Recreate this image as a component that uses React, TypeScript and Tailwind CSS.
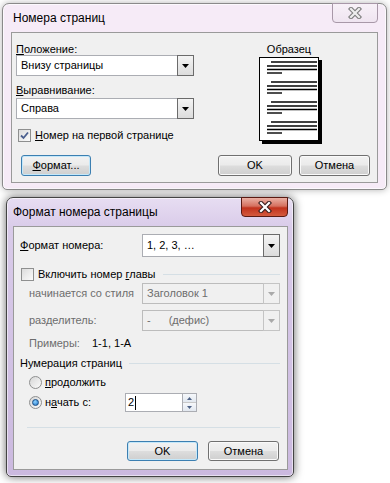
import React from "react";

function Arrow({ color }: { color: string }) {
  return (
    <svg width="7" height="4" viewBox="0 0 7 4">
      <polygon points="0,0 7,0 3.5,4" fill={color} />
    </svg>
  );
}

function Combo({
  value,
  disabled,
  className,
}: {
  value: React.ReactNode;
  disabled?: boolean;
  className: string;
}) {
  return (
    <div className={`flex ${className}`}>
      <div
        className={
          disabled
            ? "flex flex-1 items-center border border-r-0 border-[#bcbcbc] bg-[#f0f0f0] pl-[4px] text-[#6d6d6d]"
            : "flex flex-1 items-center border border-r-0 border-[#abadb3] bg-white pl-[4px]"
        }
      >
        {value}
      </div>
      <div
        className={
          disabled
            ? "flex w-[17px] items-center justify-center border border-[#c4c4c4] bg-[#f0f0f0]"
            : "flex w-[17px] items-center justify-center border border-[#6b6b6b] bg-[linear-gradient(180deg,#f4f4f4,#dcdcdc)]"
        }
      >
        <Arrow color={disabled ? "#a9a9a9" : "#000"} />
      </div>
    </div>
  );
}

function Check({ checked }: { checked?: boolean }) {
  return (
    <div className="flex h-[13px] w-[13px] shrink-0 items-center justify-center border border-[#8e8f8f] bg-[linear-gradient(135deg,#dcdcdc,#fbfbfb)]">
      {checked && (
        <svg width="9" height="9" viewBox="0 0 9 9">
          <path d="M1 4.5 L3.5 7 L8 1.5" fill="none" stroke="#4a5f8f" strokeWidth="1.8" />
        </svg>
      )}
    </div>
  );
}

function Radio({ on }: { on?: boolean }) {
  return (
    <div className="flex h-[13px] w-[13px] shrink-0 items-center justify-center rounded-full border border-[#8e8f8f] bg-[linear-gradient(135deg,#d6d6d6,#fbfbfb)]">
      {on && (
        <div className="h-[7px] w-[7px] rounded-full border border-[#1d4f85] bg-[radial-gradient(circle_at_40%_35%,#8fd3ff,#1b6fc4)]" />
      )}
    </div>
  );
}

function Btn({
  children,
  primary,
  className,
}: {
  children: React.ReactNode;
  primary?: boolean;
  className: string;
}) {
  return (
    <div
      className={`flex items-center justify-center rounded-[3px] border bg-[linear-gradient(180deg,#f2f2f2_0%,#ebebeb_48%,#dddddd_52%,#cfcfcf_100%)] ${
        primary
          ? "border-[#3c7fb1] shadow-[inset_0_0_0_1px_#c4e8fa]"
          : "border-[#707070] shadow-[inset_0_0_0_1px_#fafafa]"
      } ${className}`}
    >
      {children}
    </div>
  );
}

function CloseX({ active }: { active?: boolean }) {
  return (
    <svg width="14" height="12" viewBox="0 0 14 12">
      <path
        d="M3 2 L11 10 M11 2 L3 10"
        stroke={active ? "#3b1f1f" : "#7d7d7d"}
        strokeWidth="4.4"
        strokeLinecap="square"
      />
      <path
        d="M3 2 L11 10 M11 2 L3 10"
        stroke={active ? "#ffffff" : "#eeeeee"}
        strokeWidth="2.2"
        strokeLinecap="square"
      />
    </svg>
  );
}

function Win({
  title,
  active,
  className,
  closeClass,
  children,
}: {
  title: string;
  active?: boolean;
  className: string;
  closeClass: string;
  children: React.ReactNode;
}) {
  return (
    <div
      className={`relative flex flex-col rounded-t-[7px] rounded-b-[5px] border ${
        active
          ? "border-[#444] bg-[linear-gradient(180deg,#e7ddf2_0px,#d9cbe9_30px,#cbb9df_100%)] shadow-[0_0_10px_rgba(0,0,0,0.6),inset_0_0_0_1px_rgba(255,255,255,0.55)]"
          : "border-[#8a8a8a] bg-[#f6ebf7] shadow-[0_0_7px_rgba(0,0,0,0.3),inset_0_0_0_1px_rgba(255,255,255,0.7)]"
      } ${className}`}
    >
      <div
        className={`absolute -top-px flex h-[20px] items-center justify-center rounded-b-[4px] border ${
          active
            ? "border-[#5a1a12] bg-[linear-gradient(180deg,#eab0a4_0%,#d5705f_45%,#c1321d_55%,#d45a3e_100%)]"
            : "border-[#a898a8] bg-[linear-gradient(180deg,#f8f1f8,#efe4f0)]"
        } ${closeClass}`}
      >
        <CloseX active={active} />
      </div>
      <div className="flex h-[28px] items-center text-[12px]">{title}</div>
      {children}
    </div>
  );
}

function Page() {
  const groups = [0, 20, 40, 60];
  return (
    <div className="mt-[2px] h-[84px] w-[60px] border border-black bg-white shadow-[3px_3px_0_#000]">
      <svg width="58" height="82" viewBox="1 1 58 82">
        {groups.map((g) => (
          <g key={g} stroke="#000" strokeWidth="1.4">
            <line x1="12" y1={5 + g} x2="58" y2={5 + g} />
            <line x1="8" y1={9 + g} x2="58" y2={9 + g} />
            <line x1="8" y1={12.5 + g} x2="58" y2={12.5 + g} />
            <line x1="8" y1={16 + g} x2="23" y2={16 + g} />
          </g>
        ))}
      </svg>
    </div>
  );
}

export default function App() {
  return (
    <div className="h-[483px] w-[390px] overflow-hidden bg-white pt-[3px] font-['Liberation_Sans',Arial,sans-serif] text-[11px] text-black">
      <Win
        title="Номера страниц"
        className="ml-[2px] h-[187px] w-[385px] px-[8px] [&>div:nth-child(2)]:pl-[2px]"
        closeClass="right-[8px] w-[46px]"
      >
        <div className="flex h-[151px] flex-col border border-[#9a9a9a] bg-[#f0f0f0]">
          <div className="flex">
            <div className="flex w-[189px] flex-col pl-[4px] pt-[10px]">
              <div className="leading-[12px]">
                <u>П</u>оложение:
              </div>
              <Combo value="Внизу страницы" className="h-[21px] w-[178px]" />
              <div className="mt-[8px] leading-[12px]">
                <u>В</u>ыравнивание:
              </div>
              <Combo value="Справа" className="mt-[2px] h-[21px] w-[178px]" />
              <div className="mt-[10px] flex h-[13px] items-center pl-[2px]">
                <Check checked />
                <span className="ml-[4px]">
                  <u>Н</u>омер на первой странице
                </span>
              </div>
            </div>
            <div className="flex flex-1 flex-col items-center pt-[10px]">
              <div className="leading-[12px]">Образец</div>
              <Page />
            </div>
          </div>
          <div className="mt-[13px] flex">
            <Btn primary className="ml-[9px] h-[21px] w-[70px]">
              <span>
                <u>Ф</u>ормат...
              </span>
            </Btn>
            <Btn className="ml-auto h-[21px] w-[74px]">OK</Btn>
            <Btn className="ml-[7px] mr-[7px] h-[21px] w-[71px]">Отмена</Btn>
          </div>
        </div>
      </Win>

      <Win
        active
        title="Формат номера страницы"
        className="ml-[6px] mt-[7px] h-[280px] w-[288px] pl-[6px] pr-[5px]"
        closeClass="right-[5px] w-[47px]"
      >
        <div className="flex h-[244px] flex-col border border-[#9a9a9a] bg-[#f0f0f0]">
          <div className="mt-[7px] flex items-center justify-between pl-[6px] pr-[7px]">
            <span>
              <u>Ф</u>ормат номера:
            </span>
            <Combo value="1, 2, 3, …" className="h-[23px] w-[138px]" />
          </div>
          <div className="mt-[9px] flex h-[16px] items-center pl-[7px] pr-[7px]">
            <Check />
            <span className="ml-[4px]">
              Включить номер <u>г</u>лавы
            </span>
            <div className="ml-[7px] h-px flex-1 bg-[#d5dfe5]" />
          </div>
          <div className="mt-[1px] flex items-center justify-between pl-[15px] pr-[7px]">
            <span className="text-[#6d6d6d]">начинается со стиля</span>
            <Combo disabled value="Заголовок 1" className="h-[21px] w-[138px]" />
          </div>
          <div className="mt-[6px] flex items-center justify-between pl-[15px] pr-[7px]">
            <span className="text-[#6d6d6d]">разделитель:</span>
            <Combo
              disabled
              value={
                <>
                  <span>-</span>
                  <span className="ml-[18px]">(дефис)</span>
                </>
              }
              className="h-[21px] w-[138px]"
            />
          </div>
          <div className="mt-[4px] flex h-[16px] items-center pl-[15px]">
            <span className="w-[63px] text-[#6d6d6d]">Примеры:</span>
            <span>1-1, 1-A</span>
          </div>
          <div className="mt-[4px] flex h-[16px] items-center pl-[6px] pr-[7px]">
            <span>Нумерация страниц</span>
            <div className="ml-[7px] h-px flex-1 bg-[#d5dfe5]" />
          </div>
          <div className="mt-[3px] flex h-[16px] items-center pl-[15px]">
            <Radio />
            <span className="ml-[3px]">
              <u>п</u>родолжить
            </span>
          </div>
          <div className="mt-[3px] flex h-[19px] items-center pl-[15px]">
            <Radio on />
            <span className="ml-[3px] w-[80px]">
              н<u>а</u>чать с:
            </span>
            <div className="flex h-[19px] w-[72px]">
              <div className="flex flex-1 items-center border border-r-0 border-[#abadb3] bg-white pl-[2px]">
                <span>2</span>
                <span className="ml-px h-[14px] w-px bg-black" />
              </div>
              <div className="flex w-[15px] flex-col border border-[#abadb3] bg-white">
                <div className="flex flex-1 items-center justify-center border-b border-[#c8c8c8] bg-[linear-gradient(180deg,#f6f8fb,#e2e8f0)]">
                  <svg width="5" height="3" viewBox="0 0 5 3">
                    <polygon points="0,3 5,3 2.5,0" fill="#4d6185" />
                  </svg>
                </div>
                <div className="flex flex-1 items-center justify-center bg-[linear-gradient(180deg,#f6f8fb,#e2e8f0)]">
                  <svg width="5" height="3" viewBox="0 0 5 3">
                    <polygon points="0,0 5,0 2.5,3" fill="#4d6185" />
                  </svg>
                </div>
              </div>
            </div>
          </div>
          <div className="ml-[13px] mr-[7px] mt-[15px] h-px bg-[#d5dfe5]" />
          <div className="mt-[13px] flex justify-end gap-[10px] pr-[8px]">
            <Btn primary className="h-[20px] w-[71px]">
              OK
            </Btn>
            <Btn className="h-[20px] w-[71px]">Отмена</Btn>
          </div>
        </div>
      </Win>
    </div>
  );
}
